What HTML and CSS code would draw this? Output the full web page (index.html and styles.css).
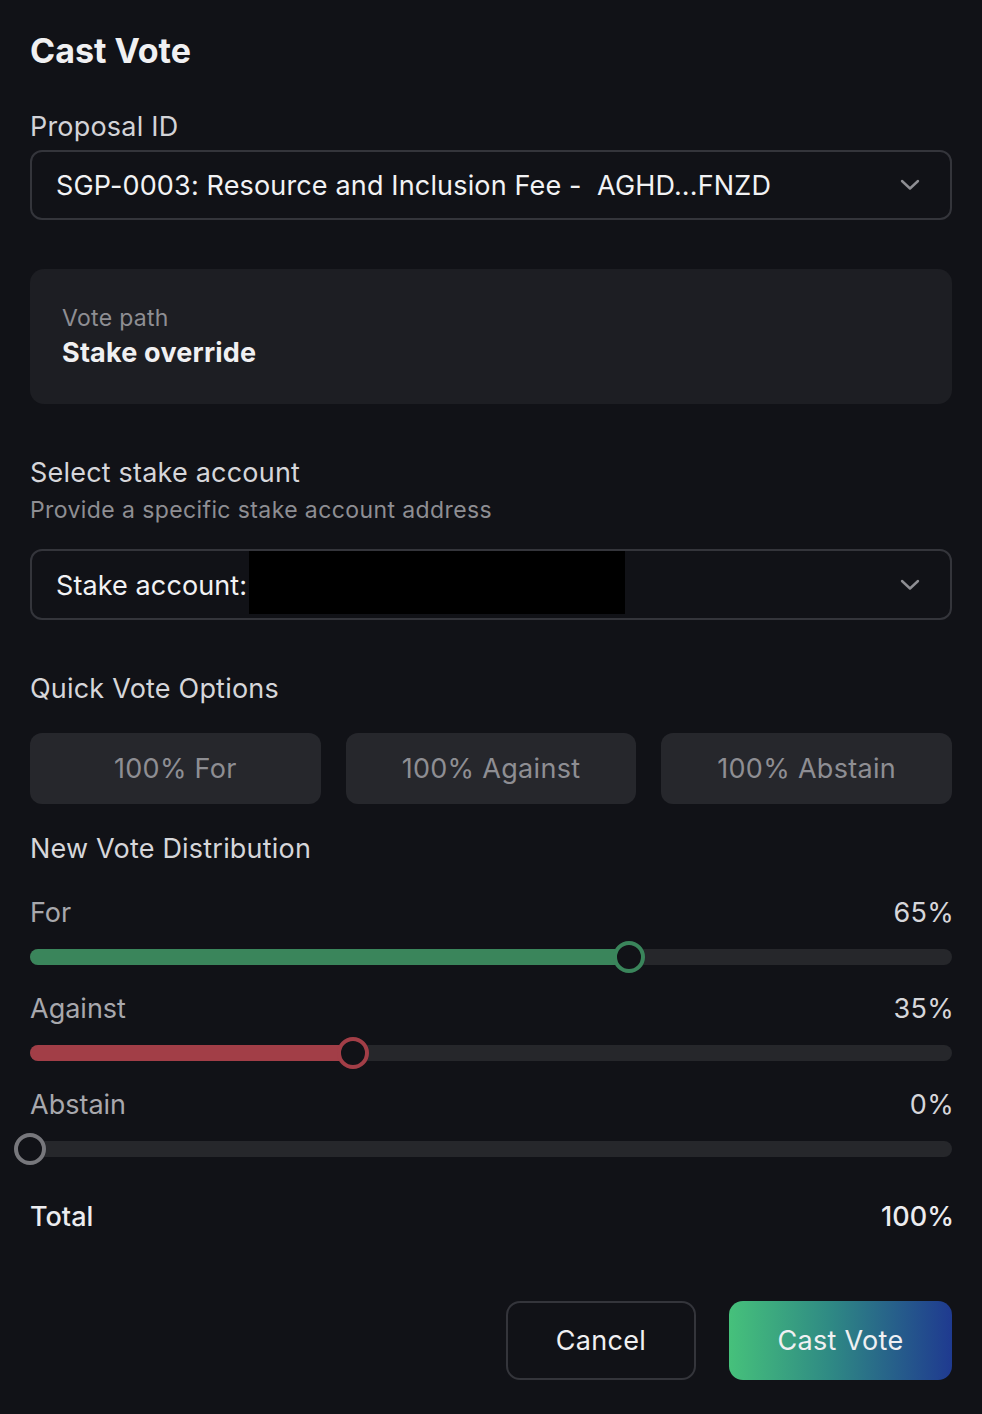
FILE: index.html
```html
<!DOCTYPE html>
<html lang="en">
<head>
<meta charset="utf-8">
<title>Cast Vote</title>
<link rel="stylesheet" href="styles.css">
</head>
<body>
<main class="dialog">
  <h1 class="title">Cast Vote</h1>

  <label class="field-label">Proposal ID</label>
  <div class="select select-proposal">
    <span class="select-text">SGP-0003: Resource and Inclusion Fee -&nbsp; AGHD...FNZD</span>
    <svg class="chevron" width="20" height="12" viewBox="0 0 20 12"><path d="M2 2 L10 9.5 L18 2" fill="none" stroke="#8e8e93" stroke-width="2.4" stroke-linecap="round" stroke-linejoin="round"/></svg>
  </div>

  <section class="path-card">
    <div class="path-label">Vote path</div>
    <div class="path-value">Stake override</div>
  </section>

  <div class="section-title stake-title">Select stake account</div>
  <div class="section-sub">Provide a specific stake account address</div>
  <div class="select select-stake">
    <span class="select-text">Stake account:</span><span class="redacted"></span>
    <svg class="chevron" width="20" height="12" viewBox="0 0 20 12"><path d="M2 2 L10 9.5 L18 2" fill="none" stroke="#8e8e93" stroke-width="2.4" stroke-linecap="round" stroke-linejoin="round"/></svg>
  </div>

  <div class="section-title quick-title">Quick Vote Options</div>
  <div class="quick-grid">
    <button class="quick-btn">100% For</button>
    <button class="quick-btn">100% Against</button>
    <button class="quick-btn">100% Abstain</button>
  </div>

  <div class="section-title dist-title">New Vote Distribution</div>

  <div class="slider-row">
    <div class="slider-head"><span class="slider-name">For</span><span class="slider-val">65%</span></div>
    <div class="track">
      <div class="fill fill-for" style="width:65%"></div>
      <div class="thumb thumb-for" style="left:65%"></div>
    </div>
  </div>

  <div class="slider-row">
    <div class="slider-head"><span class="slider-name">Against</span><span class="slider-val">35%</span></div>
    <div class="track">
      <div class="fill fill-against" style="width:35%"></div>
      <div class="thumb thumb-against" style="left:35%"></div>
    </div>
  </div>

  <div class="slider-row">
    <div class="slider-head"><span class="slider-name">Abstain</span><span class="slider-val">0%</span></div>
    <div class="track">
      <div class="thumb thumb-abstain" style="left:0%"></div>
    </div>
  </div>

  <div class="total-row"><span>Total</span><span>100%</span></div>

  <div class="actions">
    <button class="btn btn-cancel">Cancel</button>
    <button class="btn btn-primary">Cast Vote</button>
  </div>
</main>
</body>
</html>
```

FILE: styles.css
```css
* { box-sizing: border-box; }

html, body {
  margin: 0;
  padding: 0;
  background: #111217;
}

body {
  font-family: Inter, "Noto Sans", "Liberation Sans", sans-serif;
  color: #e6e6ea;
  -webkit-font-smoothing: antialiased;
}

.dialog {
  width: 982px;
  padding: 29px 30px 0 30px;
  display: flex;
  flex-direction: column;
}

.title {
  margin: 0;
  font-size: 34px;
  line-height: 44px;
  font-weight: 700;
  color: #f0f0f2;
}

.field-label {
  display: block;
  margin-top: 37px;
  font-size: 27px;
  line-height: 34px;
  color: #d3d3d7;
  letter-spacing: 0.2px;
}

.select {
  margin-top: 6px;
  height: 70px;
  border: 2px solid #34353b;
  border-radius: 12px;
  padding: 0 30px 0 24px;
  display: flex;
  align-items: center;
  background: #111217;
}

.select-text {
  font-size: 27px;
  color: #f2f2f4;
  white-space: nowrap;
  letter-spacing: 0.15px;
}

.chevron {
  margin-left: auto;
  flex: none;
}

.path-card {
  margin-top: 49px;
  height: 135px;
  background: #1d1e23;
  border-radius: 14px;
  padding: 34px 32px 0 32px;
}

.path-label {
  font-size: 23px;
  line-height: 30px;
  color: #8e8e93;
  letter-spacing: 0.3px;
}

.path-value {
  margin-top: 3px;
  font-size: 27px;
  line-height: 34px;
  font-weight: 700;
  color: #f0f0f2;
  letter-spacing: 0.2px;
}

.section-title {
  font-size: 27px;
  line-height: 34px;
  color: #d6d6da;
  letter-spacing: 0.2px;
}

.stake-title { margin-top: 52px; }

.section-sub {
  margin-top: 5px;
  font-size: 23px;
  line-height: 30px;
  color: #8e8e93;
  letter-spacing: 0.4px;
}

.select-stake {
  margin-top: 24px;
  height: 71px;
  align-items: flex-start;
}

.select-stake .select-text {
  margin-top: 18px;
  letter-spacing: 0.1px;
}

.redacted {
  display: block;
  width: 376px;
  height: 63px;
  background: #000;
  margin-left: 2px;
}

.select-stake .chevron { align-self: center; }

.quick-title { margin-top: 52px; }

.quick-grid {
  margin-top: 27px;
  display: grid;
  grid-template-columns: repeat(3, 1fr);
  gap: 25px;
}

.quick-btn {
  height: 71px;
  border: 0;
  border-radius: 12px;
  background: #26272c;
  color: #8e8e93;
  font-family: inherit;
  font-size: 27px;
  letter-spacing: 0.3px;
  padding: 0;
}

.dist-title { margin-top: 28px; }

.slider-row { margin-top: 27px; }
.dist-title + .slider-row { margin-top: 30px; }

.slider-head {
  display: flex;
  justify-content: space-between;
  font-size: 27px;
  line-height: 34px;
}

.slider-name { color: #a8a8ad; }
.slider-val { color: #d6d6da; letter-spacing: 0.3px; margin-right: -2px; }

.track {
  position: relative;
  margin-top: 19px;
  height: 16px;
  border-radius: 8px;
  background: #26272b;
}

.fill {
  height: 100%;
  border-radius: 8px 0 0 8px;
}

.fill-for { background: #3a855b; }
.fill-against { background: #a23e47; }

.thumb {
  position: absolute;
  top: 50%;
  width: 32px;
  height: 32px;
  margin: -16px 0 0 -16px;
  border-radius: 50%;
  background: #111217;
  border: 4px solid #7a7a7f;
}

.thumb-for { border-color: #3a855b; }
.thumb-against { border-color: #a23e47; }
.thumb-abstain { border-color: #77777c; }

.total-row {
  margin-top: 43px;
  display: flex;
  justify-content: space-between;
  font-size: 27px;
  line-height: 34px;
  color: #ececef;
  font-weight: 500;
}

.total-row span:last-child { margin-right: -2px; }

.actions {
  margin-top: 67px;
  display: flex;
  justify-content: flex-end;
  gap: 33px;
}

.btn {
  height: 79px;
  border-radius: 14px;
  font-family: inherit;
  font-size: 27px;
  color: #f0f0f2;
  padding: 0;
  letter-spacing: 0.3px;
}

.btn-cancel {
  width: 190px;
  background: #111217;
  border: 2px solid #34353b;
}

.btn-primary {
  width: 223px;
  border: 0;
  background: linear-gradient(90deg, #46c17b 0%, #2f8a84 45%, #1f3a90 100%);
}
```
